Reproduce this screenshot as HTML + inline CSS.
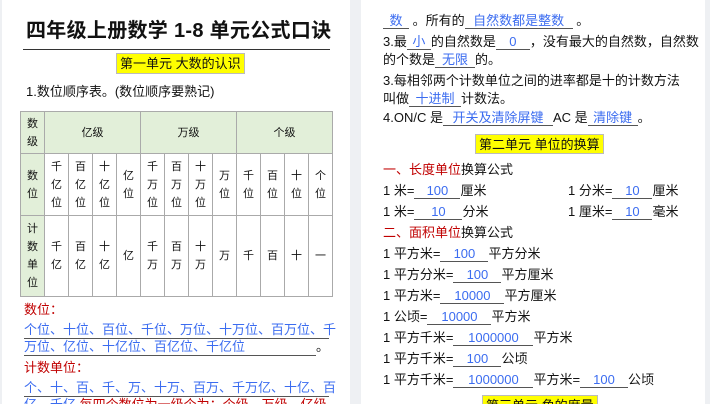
<!DOCTYPE html>
<html><head><meta charset="utf-8"><style>
*{margin:0;padding:0;box-sizing:border-box}
html,body{width:710px;height:404px;overflow:hidden}
body{background:#eef0f3;font-family:"Liberation Sans","Noto Sans CJK SC",sans-serif;color:#111;position:relative}
.pg{position:absolute;top:0;height:404px;background:#fff}
.a{position:absolute;white-space:nowrap;font-size:13px;line-height:16px}
.b{color:#3b6cf0}
.r{color:#c00000}
.u{display:inline-block;border-bottom:1px solid #555;text-align:center;color:#3b6cf0;line-height:15px}
.y{position:absolute;background:#ffff00;border:1px solid #bbb;font-size:13px;line-height:19px;text-align:center;white-space:nowrap;padding:0 3px}
table{position:absolute;left:20px;top:111px;border-collapse:collapse;font-size:11px}
td{border:1px solid #aaa;width:24px;text-align:center;vertical-align:middle;line-height:18px;padding:0}
.g{background:#e2efd9}
</style></head><body>
<div class="pg" style="left:2px;width:348px"></div>
<div class="pg" style="left:361px;width:344px"></div>

<div class="a" style="left:26px;top:18px;font-size:20px;line-height:26px;font-weight:bold;letter-spacing:0.3px">四年级上册数学 1-8 单元公式口诀</div>
<div style="position:absolute;left:23px;top:49px;width:307px;height:1px;background:#333"></div>
<div class="y" style="left:116px;top:53px;height:21px">第一单元 大数的认识</div>
<div class="a" style="left:26px;top:84px">1.数位顺序表。(数位顺序要熟记)</div>

<table>
<tr style="height:42px"><td class="g">数<br>级</td><td class="g" colspan="4">亿级</td><td class="g" colspan="4">万级</td><td class="g" colspan="4">个级</td></tr>
<tr style="height:62px"><td class="g">数<br>位</td><td>千<br>亿<br>位</td><td>百<br>亿<br>位</td><td>十<br>亿<br>位</td><td>亿<br>位</td><td>千<br>万<br>位</td><td>百<br>万<br>位</td><td>十<br>万<br>位</td><td>万<br>位</td><td>千<br>位</td><td>百<br>位</td><td>十<br>位</td><td>个<br>位</td></tr>
<tr style="height:81px"><td class="g">计<br>数<br>单<br>位</td><td>千<br>亿</td><td>百<br>亿</td><td>十<br>亿</td><td>亿</td><td>千<br>万</td><td>百<br>万</td><td>十<br>万</td><td>万</td><td>千</td><td>百</td><td>十</td><td>一</td></tr>
</table>

<div class="a r" style="left:24px;top:302px">数位：</div>
<div class="a b" style="left:24px;top:322px;border-bottom:1px solid #555;width:305px">个位、十位、百位、千位、万位、十万位、百万位、千</div>
<div class="a b" style="left:24px;top:339px;border-bottom:1px solid #555;width:292px">万位、亿位、十亿位、百亿位、千亿位</div>
<div class="a" style="left:316px;top:339px">。</div>
<div class="a r" style="left:24px;top:360px">计数单位：</div>
<div class="a b" style="left:24px;top:380px;border-bottom:1px solid #555;width:305px">个、十、百、千、万、十万、百万、千万亿、十亿、百</div>
<div class="a b" style="left:24px;top:397px">亿、千亿 <span class="r">每四个数位为一级个为：个级、万级、亿级</span></div>

<div class="a" style="left:383px;top:13px"><span class="u" style="width:26px">数</span> 。所有的<span class="u" style="width:108px">自然数都是整数</span> 。</div>
<div class="a" style="left:383px;top:34px">3.最<span class="u" style="width:24px">小</span>的自然数是<span class="u" style="width:34px">0</span>，没有最大的自然数，自然数</div>
<div class="a" style="left:383px;top:52px">的个数是<span class="u" style="width:40px">无限</span>的。</div>
<div class="a" style="left:383px;top:73px">3.每相邻两个计数单位之间的进率都是十的计数方法</div>
<div class="a" style="left:383px;top:91px">叫做<span class="u" style="width:52px">十进制</span>计数法。</div>
<div class="a" style="left:383px;top:110px">4.ON/C 是<span class="u" style="width:110px">开关及清除屏键</span>AC 是<span class="u" style="width:50px">清除键</span>。</div>
<div class="y" style="left:475px;top:134px;height:20px">第二单元 单位的换算</div>
<div class="a" style="left:383px;top:162px"><span class="r">一、长度单位</span>换算公式</div>
<div class="a" style="left:383px;top:183px">1 米=<span class="u" style="width:46px">100</span>厘米</div>
<div class="a" style="left:568px;top:183px">1 分米=<span class="u" style="width:40px">10</span>厘米</div>
<div class="a" style="left:383px;top:204px">1 米=<span class="u" style="width:48px">10</span>分米</div>
<div class="a" style="left:568px;top:204px">1 厘米=<span class="u" style="width:40px">10</span>毫米</div>
<div class="a" style="left:383px;top:225px"><span class="r">二、面积单位</span>换算公式</div>
<div class="a" style="left:383px;top:246px">1 平方米=<span class="u" style="width:48px">100</span>平方分米</div>
<div class="a" style="left:383px;top:267px">1 平方分米=<span class="u" style="width:48px">100</span>平方厘米</div>
<div class="a" style="left:383px;top:288px">1 平方米=<span class="u" style="width:64px">10000</span>平方厘米</div>
<div class="a" style="left:383px;top:309px">1 公顷=<span class="u" style="width:64px">10000</span>平方米</div>
<div class="a" style="left:383px;top:330px">1 平方千米=<span class="u" style="width:80px">1000000</span>平方米</div>
<div class="a" style="left:383px;top:351px">1 平方千米=<span class="u" style="width:48px">100</span>公顷</div>
<div class="a" style="left:383px;top:372px">1 平方千米=<span class="u" style="width:80px">1000000</span>平方米=<span class="u" style="width:48px">100</span>公顷</div>
<div class="y" style="left:482px;top:395px;height:20px">第三单元 角的度量</div>
</body></html>
